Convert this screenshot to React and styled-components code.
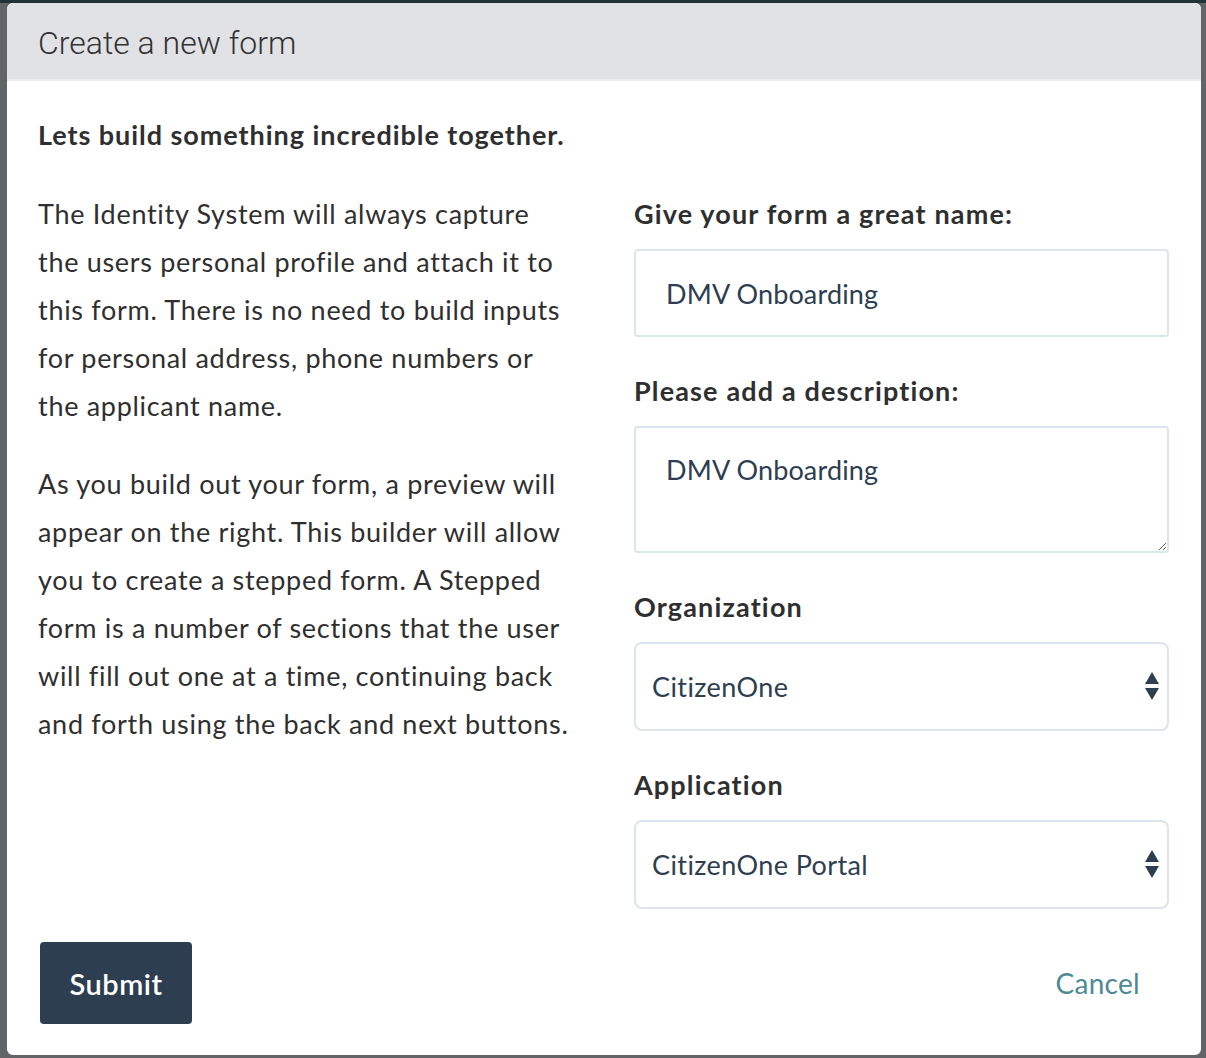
import React from 'react';
import styled, { createGlobalStyle } from 'styled-components';

const GlobalStyle = createGlobalStyle`
  html, body {
    margin: 0;
    padding: 0;
    background: #5f6262;
  }
  * { box-sizing: border-box; }
`;

// styles
const Backdrop = styled.div`
  width: 1206px;
  height: 1058px;
  padding: 3px 5px 3px 7px;
  background: linear-gradient(#1f3235 0 3px, #626565 3px);
  overflow: hidden;
`;

const Modal = styled.div`
  height: 1052px;
  background: #fff;
  border-radius: 6px;
  overflow: hidden;
  display: flex;
  flex-direction: column;
  font-family: Lato, "Open Sans", sans-serif;
  color: #2f2f2f;
`;

const Header = styled.div`
  height: 78px;
  background: #e1e2e6;
  border-bottom: 2px solid #e9ecee;
  padding-left: 31px;
  display: flex;
  align-items: center;
`;

const Title = styled.h1`
  margin: 3px 0 0;
  font-family: Roboto, "Liberation Sans", sans-serif;
  font-weight: 300;
  font-size: 32px;
  color: #333;
`;

const Body = styled.div`
  flex: 1;
  padding: 34px 32px 0 31px;
  display: flex;
  flex-direction: column;
`;

const Intro = styled.p`
  margin: 0;
  font-weight: 700;
  font-size: 27px;
  letter-spacing: 0.95px;
  line-height: 40px;
`;

const Columns = styled.div`
  margin-top: 35px;
  display: grid;
  grid-template-columns: 1fr 535px;
  column-gap: 30px;
`;

const Text = styled.p`
  margin: 0 0 30px;
  font-size: 27px;
  letter-spacing: 0.7px;
  line-height: 48px;
  white-space: nowrap;
`;

const Field = styled.div`
  display: flex;
  flex-direction: column;
  & + & { margin-top: 30px; }
`;

const Label = styled.label`
  font-weight: 700;
  font-size: 27px;
  letter-spacing: 1.15px;
  line-height: 48px;
  color: #2f2f2f;
  margin-bottom: 11px;
`;

const TextInput = styled.input`
  height: 88px;
  width: 100%;
  border: 2px solid #dde5ec;
  border-radius: 4px;
  padding: 0 30px;
  font-family: Lato, "Open Sans", sans-serif;
  font-size: 27px;
  letter-spacing: 0.15px;
  color: #2d3e50;
  outline: none;
`;

const TextArea = styled.textarea`
  height: 127px;
  width: 100%;
  border: 2px solid #dde5ec;
  border-radius: 4px;
  padding: 24px 30px 0;
  font-family: Lato, "Open Sans", sans-serif;
  font-size: 27px;
  letter-spacing: 0.15px;
  line-height: 36px;
  color: #2d3e50;
  outline: none;
  resize: vertical;
`;

const SelectWrap = styled.div`
  position: relative;
`;

const Select = styled.select`
  appearance: none;
  display: block;
  height: 89px;
  width: 100%;
  border: 2px solid #dde5ec;
  border-radius: 8px;
  padding: 0 40px 0 16px;
  background: #fff;
  font-family: Lato, "Open Sans", sans-serif;
  font-size: 27px;
  letter-spacing: 0.4px;
  color: #2d3e50;
  outline: none;
`;

const Arrows = styled.svg`
  position: absolute;
  right: 9px;
  top: 30px;
  pointer-events: none;
`;

const Footer = styled.div`
  margin-top: 33px;
  padding: 0 29px 0 2px;
  display: flex;
  justify-content: space-between;
  align-items: center;
`;

const SubmitBtn = styled.button`
  width: 152px;
  height: 82px;
  border: none;
  border-radius: 4px;
  background: #2d3e50;
  color: #fff;
  font-family: Lato, "Open Sans", sans-serif;
  font-weight: 600;
  font-size: 29px;
  letter-spacing: 0.5px;
  cursor: pointer;
`;

const CancelLink = styled.a`
  font-size: 28px;
  letter-spacing: 0.3px;
  color: #4e8a95;
  text-decoration: none;
  cursor: pointer;
`;

function SelectField({ label, value }) {
  return (
    <Field>
      <Label>{label}</Label>
      <SelectWrap>
        <Select defaultValue={value}>
          <option>{value}</option>
        </Select>
        <Arrows width="16" height="30" viewBox="0 0 16 30">
          <polygon points="8,0 15,12 1,12" fill="#2d3e50" />
          <polygon points="1,16 15,16 8,28" fill="#2d3e50" />
        </Arrows>
      </SelectWrap>
    </Field>
  );
}

export default function App() {
  return (
    <Backdrop>
      <GlobalStyle />
      <Modal>
        <Header>
          <Title>Create a new form</Title>
        </Header>
        <Body>
          <Intro>Lets build something incredible together.</Intro>
          <Columns>
            <div>
              <Text>
                The Identity System will always capture<br />
                the users personal profile and attach it to<br />
                this form. There is no need to build inputs<br />
                for personal address, phone numbers or<br />
                the applicant name.
              </Text>
              <Text>
                As you build out your form, a preview will<br />
                appear on the right. This builder will allow<br />
                you to create a stepped form. A Stepped<br />
                form is a number of sections that the user<br />
                will fill out one at a time, continuing back<br />
                and forth using the back and next buttons.
              </Text>
            </div>
            <div>
              <Field>
                <Label>Give your form a great name:</Label>
                <TextInput defaultValue="DMV Onboarding" />
              </Field>
              <Field>
                <Label>Please add a description:</Label>
                <TextArea defaultValue="DMV Onboarding" />
              </Field>
              <SelectField label="Organization" value="CitizenOne" />
              <SelectField label="Application" value="CitizenOne Portal" />
            </div>
          </Columns>
          <Footer>
            <SubmitBtn>Submit</SubmitBtn>
            <CancelLink>Cancel</CancelLink>
          </Footer>
        </Body>
      </Modal>
    </Backdrop>
  );
}
